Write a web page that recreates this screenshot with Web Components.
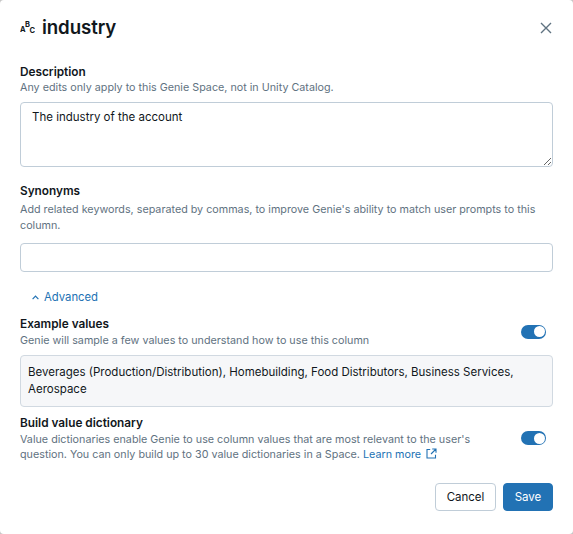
<!DOCTYPE html>
<html>
<head>
<meta charset="utf-8">
<title>industry</title>
<style>
  html, body { margin: 0; height: 100%; background: #c6c6c6; }
  body { font-family: Inter, "Liberation Sans", sans-serif; color: #11171c; overflow: hidden; }
</style>
</head>
<body>
<column-dialog>
  <span slot="title">industry</span>

  <form-field label="Description" hint="Any edits only apply to this Genie Space, not in Unity Catalog." hint-top="0" hint-line="15" gap="7">
    <text-box multiline value="The industry of the account"></text-box>
  </form-field>

  <form-field label="Synonyms" hint="Add related keywords, separated by commas, to improve Genie's ability to match user prompts to this column." hint-top="3" hint-line="16" gap="9" style="margin-top:16px">
    <text-box></text-box>
  </form-field>

  <advanced-link>Advanced</advanced-link>

  <toggle-row label="Example values" style="margin-top:11px">Genie will sample a few values to understand how to use this column</toggle-row>
  <value-box>Beverages (Production/Distribution), Homebuilding, Food Distributors, Business Services, Aerospace</value-box>
  <toggle-row label="Build value dictionary" style="margin-top:8px">Value dictionaries enable Genie to use column values that are most relevant to the user's<br>question. You can only build up to 30 value dictionaries in a Space. <a href="#" style="color:#2272b4;text-decoration:none">Learn more</a><svg width="11" height="11" viewBox="0 0 11 11" fill="none" stroke="#2272b4" stroke-width="1.1" style="margin-left:5px;vertical-align:-0.5px"><path d="M4.2 1.5H1v8.5h8.5V6.8M6.2 1h3.8v3.8M10 1L5 6"/></svg></toggle-row>

  <action-button slot="footer">Cancel</action-button>
  <action-button slot="footer" primary>Save</action-button>
</column-dialog>

<script>
function shadow(el, html) {
    el.attachShadow({ mode: "open" }).innerHTML = html;
}

customElements.define("column-dialog", class extends HTMLElement {
    connectedCallback() {
        shadow(this, `
<style>
  :host { display: flex; flex-direction: column; box-sizing: border-box; height: 534px; background: #fff; border-radius: 4px; padding: 15px 20px 0; }
  header { display: flex; align-items: center; height: 26px; }
  h1 { flex: 1; margin: 0 0 0 7px; font-size: 18.7px; line-height: 26px; font-weight: 600; letter-spacing: -0.1px; }
  svg { display: block; }
  .abc { width: 15px; height: 15px; }
  .abc text { font: 700 7.5px Inter, "Liberation Sans", sans-serif; fill: #11171c; }
  .body { display: flex; flex-direction: column; margin-top: 23px; }
  footer { display: flex; justify-content: flex-end; gap: 7px; margin-top: 21px; }
</style>
<header>
  <svg class="abc" viewBox="0 0 15 15"><text x="0" y="10.5">A</text><text x="5" y="6">B</text><text x="9.5" y="11.5">C</text></svg>
  <h1><slot name="title"></slot></h1>
  <svg width="14" height="14" viewBox="0 0 14 14" fill="none" stroke="#5f7281" stroke-width="1.4"><path d="M2 2l10 10M12 2L2 12"/></svg>
</header>
<div class="body"><slot></slot></div>
<footer><slot name="footer"></slot></footer>`);
    }
});

customElements.define("form-field", class extends HTMLElement {
    connectedCallback() {
        shadow(this, `
<style>
  :host { display: block; }
  .label { font-size: 11.8px; line-height: 16px; font-weight: 600; }
  .hint { font-size: 10.75px; line-height: ${this.getAttribute("hint-line")}px; margin-top: ${this.getAttribute("hint-top")}px; color: #5f7281; }
  .ctl { margin-top: ${this.getAttribute("gap")}px; }
</style>
<div class="label">${this.getAttribute("label")}</div>
<div class="hint">${this.getAttribute("hint")}</div>
<div class="ctl"><slot></slot></div>`);
    }
});

customElements.define("text-box", class extends HTMLElement {
    connectedCallback() {
        const tag = this.hasAttribute("multiline")
            ? `<textarea spellcheck="false">${this.getAttribute("value") || ""}</textarea>`
            : `<input>`;
        shadow(this, `
<style>
  :host { display: block; }
  textarea, input { display: block; box-sizing: border-box; width: 100%; border: 1px solid #c0cdd8; border-radius: 4px; background: #fff; color: #11171c; font: 11.5px/16px Inter, "Liberation Sans", sans-serif; outline: none; margin: 0; }
  textarea { height: 65px; padding: 6px 11px; resize: vertical; }
  input { height: 29px; padding: 0 11px; }
</style>
${tag}`);
    }
});

customElements.define("advanced-link", class extends HTMLElement {
    connectedCallback() {
        shadow(this, `
<style>
  :host { display: flex; align-items: center; gap: 5px; margin: 17px 0 0 12px; font-size: 11.3px; line-height: 16px; color: #2272b4; }
  svg { display: block; }
</style>
<svg width="7" height="5" viewBox="0 0 7 5" fill="none" stroke="#2272b4" stroke-width="1.2"><path d="M0.6 4.2L3.5 1.2l2.9 3"/></svg>
<span><slot></slot></span>`);
    }
});

customElements.define("toggle-switch", class extends HTMLElement {
    connectedCallback() {
        shadow(this, `
<style>
  :host { display: block; box-sizing: border-box; width: 25px; height: 14px; border-radius: 7px; background: #2272b4; position: relative; }
  i { position: absolute; right: 1.5px; top: 1.5px; width: 11px; height: 11px; border-radius: 50%; background: #fff; }
</style>
<i></i>`);
    }
});

customElements.define("toggle-row", class extends HTMLElement {
    connectedCallback() {
        shadow(this, `
<style>
  :host { display: flex; align-items: center; justify-content: space-between; }
  .text { width: 470px; }
  .label { font-size: 11.8px; line-height: 16px; font-weight: 600; }
  .hint { font-size: 10.75px; line-height: 15px; margin-top: 1px; color: #5f7281; }
  toggle-switch { margin: 0 7px 1px 0; flex: none; }
</style>
<div class="text"><div class="label">${this.getAttribute("label")}</div><div class="hint"><slot></slot></div></div>
<toggle-switch></toggle-switch>`);
    }
});

customElements.define("value-box", class extends HTMLElement {
    connectedCallback() {
        shadow(this, `
<style>
  :host { display: block; box-sizing: border-box; margin-top: 7px; padding: 8px 7px; height: 52px; background: #f6f7f9; border: 1px solid #d1d9e1; border-radius: 4px; font-size: 11.5px; line-height: 17px; }
</style>
<slot></slot>`);
    }
});

customElements.define("action-button", class extends HTMLElement {
    connectedCallback() {
        const primary = this.hasAttribute("primary");
        shadow(this, `
<style>
  :host { display: flex; align-items: center; justify-content: center; box-sizing: border-box; height: 28px; border-radius: 4px; font-size: 11.5px; font-weight: 400;
    width: ${primary ? 50 : 61}px;
    background: ${primary ? "#2272b4" : "#fff"};
    color: ${primary ? "#fff" : "#11171c"};
    border: 1px solid ${primary ? "#2272b4" : "#c0cdd8"}; }
</style>
<slot></slot>`);
    }
});
</script>
</body>
</html>
